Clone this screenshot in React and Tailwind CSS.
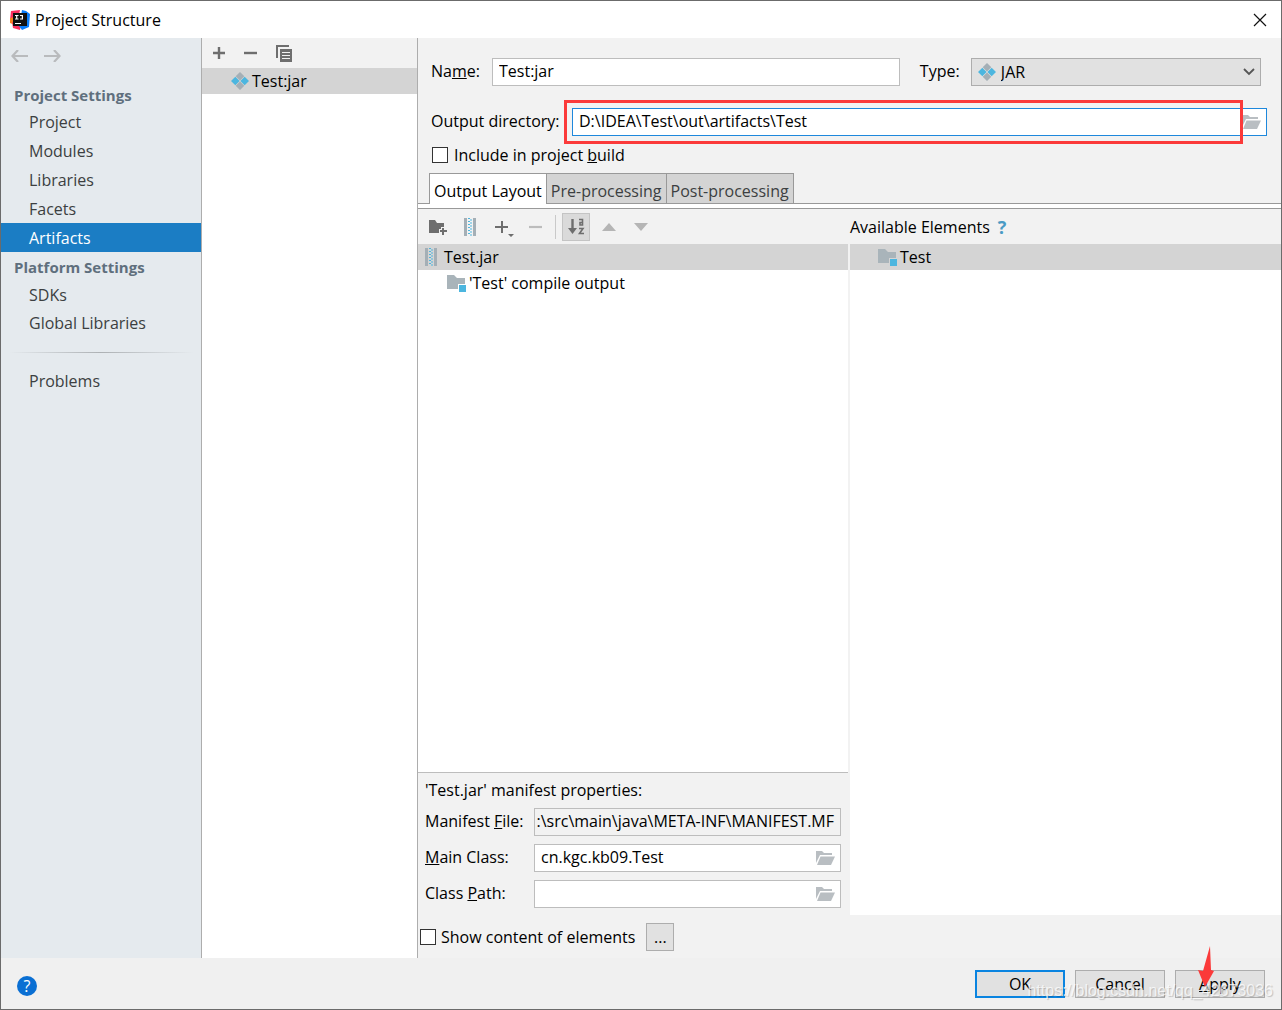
import clsx from "clsx";
import { useState } from "react";

const projectItems = ["Project", "Modules", "Libraries", "Facets", "Artifacts"];
const platformItems = ["SDKs", "Global Libraries"];
const tabs = ["Output Layout", "Pre-processing", "Post-processing"];

function AppLogo() {
  return (
    <svg width="20" height="20" viewBox="0 0 20 20">
      <path d="M1 1l9-1-2 10-8 0z" fill="#fe2f60" />
      <path d="M0 8l5-1v8l-5-2z" fill="#fc801d" />
      <path d="M2 12l9 3-1 5-7-2z" fill="#fe315d" />
      <path d="M12 0l4 1 4 3-1 13-7 3-3-4z" fill="#087cfa" />
      <rect x="3" y="3" width="14" height="13" fill="#111" />
      <path d="M5 5.500h3.500M6.700 5v4M5 9h3.500M10 5.500h3M12.400 5v4h-2.400" stroke="#fff" strokeWidth="1.200" fill="none" />
      <path d="M5 13.500h6" stroke="#fff" strokeWidth="1" />
    </svg>
  );
}

function DiamondIcon() {
  return (
    <svg width="18" height="18" viewBox="0 0 18 18" className="shrink-0">
      <path d="M9 0l4.300 4.300L9 8.600 4.700 4.300zM9 9.400l4.300 4.300L9 18l-4.300-4.300z" fill="#a4afb6" />
      <path d="M4.300 4.700L8.600 9l-4.300 4.300L0 9zM13.700 4.700L18 9l-4.300 4.300L9.400 9z" fill="#4cb6df" />
    </svg>
  );
}

function ArchiveIcon() {
  return (
    <svg width="12" height="18" viewBox="0 0 12 18" className="shrink-0">
      <path d="M0 0h3v18H0zM9 0h3v18H9z" fill="#a4afb6" />
      <path
        d="M4 .5h2M6 2h2M4 3.500h2M6 5h2M4 6.500h2M6 8h2M4 9.500h2M6 11h2M4 12.500h2M6 14h2M4 15.500h2M6 17h2"
        stroke="#4cb6df"
        strokeWidth="1.200"
      />
    </svg>
  );
}

function ModuleIcon() {
  return (
    <svg width="20" height="19" viewBox="0 0 20 19" className="shrink-0">
      <path d="M0 1h7l3 3h8v6h-7v5H0z" fill="#a9b4ba" />
      <path d="M12 11h7v7h-7z" fill="#4cb6df" />
    </svg>
  );
}

function BrowseIcon() {
  return (
    <svg width="19" height="14" viewBox="0 0 19 14">
      <path d="M0 12V0h6l2 2h8v2H4z" fill="#b9bec2" />
      <path d="M4.500 5.500H19L15 14H1z" fill="#b9bec2" />
    </svg>
  );
}

function Field({ id, value, browse, focused, className }) {
  return (
    <div
      className={clsx(
        "flex h-7 items-center border bg-white",
        focused ? "border-[#1e88dc]" : "border-[#bdbdbd]",
        className
      )}
    >
      <input
        id={id}
        type="text"
        defaultValue={value}
        className="h-full w-full min-w-0 flex-1 bg-transparent px-1.5 pb-0.5 outline-none"
      />
      {browse && (
        <button aria-label="Browse" className="mr-[5px]">
          <BrowseIcon />
        </button>
      )}
    </div>
  );
}

function Check({ id }) {
  return (
    <input
      id={id}
      type="checkbox"
      className="size-4 shrink-0 appearance-none border border-[#333] bg-white checked:bg-[#1d7ec5]"
    />
  );
}

function NavItem({ label, active, onClick, className }) {
  return (
    <button
      onClick={onClick}
      className={clsx(
        "block w-full pl-7 text-left",
        active ? "bg-[#1b7dc4] text-white" : "text-[#3c3f41]",
        className
      )}
    >
      {label}
    </button>
  );
}

function Sidebar() {
  const [active, setActive] = useState("Artifacts");

  return (
    <nav className="w-[201px] shrink-0 border-r border-[#adadad] bg-[#e5eaee]">
      <div className="flex h-9 items-center gap-4 pl-2.5 text-[#b9bbbd]">
        <button aria-label="Back">
          <svg width="17" height="12" viewBox="0 0 17 12" fill="none" stroke="currentColor" strokeWidth="2.200">
            <path d="M17 6H2M7 0L1.500 6l5.500 6" />
          </svg>
        </button>
        <button aria-label="Forward">
          <svg width="17" height="12" viewBox="0 0 17 12" fill="none" stroke="currentColor" strokeWidth="2.200">
            <path d="M0 6h15M10 0l5.500 6-5.500 6" />
          </svg>
        </button>
      </div>
      <h2 className="mt-2 pt-px pl-[13px] text-[15px] leading-6 font-bold text-[#5f6f7d]">
        Project Settings
      </h2>
      {projectItems.map((item) => (
        <NavItem
          key={item}
          label={item}
          active={item === active}
          onClick={() => setActive(item)}
          className="h-[29px]"
        />
      ))}
      <h2 className="pt-px pl-[13px] text-[15px] leading-7 font-bold text-[#5f6f7d]">
        Platform Settings
      </h2>
      {platformItems.map((item) => (
        <NavItem
          key={item}
          label={item}
          active={item === active}
          onClick={() => setActive(item)}
          className="h-7"
        />
      ))}
      <div className="mx-2 mt-[15px] mb-3.5 h-px bg-linear-to-r from-transparent via-[#adb1b4] to-transparent" />
      <NavItem
        label="Problems"
        active={active === "Problems"}
        onClick={() => setActive("Problems")}
        className="h-7"
      />
    </nav>
  );
}

function ArtifactList() {
  return (
    <section className="w-[216px] shrink-0 border-r border-[#adadad] bg-white">
      <div className="flex h-[30px] items-center bg-[#f2f2f2] pl-2.5 text-[#6e6e6e]">
        <button aria-label="Add">
          <svg width="14" height="14" viewBox="0 0 14 14" stroke="currentColor" strokeWidth="2.400">
            <path d="M7 1v12M1 7h12" />
          </svg>
        </button>
        <button aria-label="Remove" className="ml-[18px]">
          <svg width="14" height="14" viewBox="0 0 14 14" stroke="currentColor" strokeWidth="2.400">
            <path d="M0 7h13" />
          </svg>
        </button>
        <button aria-label="Copy" className="ml-[18px]">
          <svg width="17" height="17" viewBox="0 0 17 17" fill="none" stroke="currentColor" strokeWidth="2">
            <path d="M1 13V1h12" />
            <path d="M4 4h12v13H4z" fill="currentColor" stroke="none" />
            <path d="M6 7.500h8M6 10.500h8M6 13.500h8" stroke="#f2f2f2" strokeWidth="1" />
          </svg>
        </button>
      </div>
      <button className="flex h-[26px] w-full items-center gap-[3px] bg-[#d4d4d4] pl-[29px]">
        <DiamondIcon />
        Test:jar
      </button>
    </section>
  );
}

function ArtifactForm() {
  return (
    <div className="pt-5 pr-3.5 pl-[13px]">
      <div className="flex items-center pr-1.5">
        <label htmlFor="name" className="w-[61px] pb-0.5">
          Na<u>m</u>e:
        </label>
        <Field id="name" value="Test:jar" className="flex-[407]" />
        <label htmlFor="type" className="ml-5 w-[51px] pb-0.5">
          Type:
        </label>
        <div className="relative flex-[291]">
          <select
            id="type"
            className="block h-7 w-full appearance-none border border-[#adadad] bg-[#e1e1e1] pl-[29px] outline-none"
          >
            <option>JAR</option>
          </select>
          <span className="pointer-events-none absolute top-[5px] left-[7px]">
            <DiamondIcon />
          </span>
          <svg
            width="12"
            height="8"
            viewBox="0 0 12 8"
            className="pointer-events-none absolute top-2.5 right-1.5"
            fill="none"
            stroke="#555"
            strokeWidth="1.800"
          >
            <path d="M1 1l5 5 5-5" />
          </svg>
        </div>
      </div>

      <div className="mt-[22px] flex items-center">
        <label htmlFor="output" className="w-[141px] pb-0.5 whitespace-nowrap">
          Output directory:
        </label>
        <div className="relative flex-1">
          <Field id="output" value="D:\IDEA\Test\out\artifacts\Test" browse focused />
          <div className="pointer-events-none absolute -top-2 right-6 -bottom-2 -left-2 border-3 border-[#fb3a3a]" />
        </div>
      </div>

      <div className="mt-1.5 flex h-[26px] items-center gap-1.5 pl-px">
        <Check id="include" />
        <label htmlFor="include">
          Include in project <u>b</u>uild
        </label>
      </div>
    </div>
  );
}

function Tabs() {
  const [active, setActive] = useState(tabs[0]);

  return (
    <div className="mt-[5px] border-b border-[#999] bg-white pb-1">
      <div className="flex h-[31px] border-b border-[#999] bg-[#f2f2f2] pl-[11px]">
        {tabs.map((tab) => (
          <button
            key={tab}
            onClick={() => setActive(tab)}
            className={clsx(
              "-mr-px border border-b-0 border-[#999] px-1 pt-1 whitespace-nowrap",
              tab === active ? "-mb-px bg-white pb-px" : "bg-[#d4d4d4] text-[#3c3f41]"
            )}
          >
            {tab}
          </button>
        ))}
      </div>
    </div>
  );
}

function LayoutToolbar() {
  return (
    <div className="flex h-[35px] items-center pl-[11px] text-[#6e6e6e]">
      <button aria-label="Create Directory">
        <svg width="18" height="17" viewBox="0 0 18 17" fill="currentColor">
          <path d="M0 2h6l2 3h7v4h-3v2h-2v4H0z" />
          <path d="M13 10h2v2h3v2h-3v3h-2v-3h-2v-2h2z" />
        </svg>
      </button>
      <button aria-label="Create Archive" className="ml-[17px]">
        <ArchiveIcon />
      </button>
      <button aria-label="Add Copy of" className="ml-[19px]">
        <svg width="19" height="20" viewBox="0 0 19 20" fill="currentColor">
          <path d="M6 4h2v5h5v2H8v5H6v-5H0V9h6zM13 17h6l-3 3z" />
        </svg>
      </button>
      <button aria-label="Remove Element" className="ml-[15px] text-[#bcbcbc]">
        <svg width="13" height="14" viewBox="0 0 13 14" stroke="currentColor" strokeWidth="2.200">
          <path d="M0 7h13" />
        </svg>
      </button>
      <div className="mr-1.5 ml-[13px] h-6 w-px bg-[#c9c9c9]" />
      <button
        aria-label="Sort Elements by Names"
        className="flex size-7 items-center justify-center border border-[#c4c4c4] bg-[#dadada]"
      >
        <svg width="17" height="17" viewBox="0 0 17 17" fill="none" stroke="currentColor" strokeWidth="2">
          <path d="M4.500 1v12" strokeWidth="2.400" />
          <path d="M0 10h9l-4.500 6z" fill="currentColor" stroke="none" />
          <path d="M11 1.500h3.500V7H12V4.500h2.500M11 10.500h4l-3.500 5h4.500" strokeWidth="1.600" />
        </svg>
      </button>
      <button aria-label="Move Up" className="ml-3 text-[#b5b5b5]">
        <svg width="14" height="8" viewBox="0 0 14 8" fill="currentColor">
          <path d="M0 8l7-8 7 8z" />
        </svg>
      </button>
      <button aria-label="Move Down" className="ml-[18px] text-[#b5b5b5]">
        <svg width="14" height="8" viewBox="0 0 14 8" fill="currentColor">
          <path d="M0 0l7 8 7-8z" />
        </svg>
      </button>
    </div>
  );
}

function Manifest() {
  return (
    <div className="border-t border-[#bdbdbd] bg-[#f2f2f2] pt-[5px] pr-[7px] pb-[7px] pl-[7px]">
      <h3 className="leading-6">'Test.jar' manifest properties:</h3>
      <div className="mt-1.5 grid grid-cols-[109px_1fr] items-center gap-y-2">
        <label htmlFor="manifest" className="pb-0.5">
          Manifest <u>F</u>ile:
        </label>
        <div className="flex h-7 items-center justify-end overflow-hidden border border-[#bdbdbd] px-1.5 pb-0.5">
          <output id="manifest" className="whitespace-nowrap">
            :\src\main\java\META-INF\MANIFEST.MF
          </output>
        </div>
        <label htmlFor="mainClass" className="pb-0.5">
          <u>M</u>ain Class:
        </label>
        <Field id="mainClass" value="cn.kgc.kb09.Test" browse />
        <label htmlFor="classPath" className="pb-0.5">
          Class <u>P</u>ath:
        </label>
        <Field id="classPath" value="" browse />
      </div>
    </div>
  );
}

function ArtifactEditor() {
  return (
    <main className="flex min-w-0 flex-1 flex-col bg-[#f2f2f2]">
      <ArtifactForm />
      <Tabs />
      <div className="grid flex-1 grid-cols-[430fr_431fr] gap-0.5">
        <section className="flex min-w-0 flex-col">
          <LayoutToolbar />
          <div className="flex-1 bg-white">
            <div className="flex h-[26px] items-center gap-[7px] bg-[#d4d4d4] pl-[7px]">
              <ArchiveIcon />
              Test.jar
            </div>
            <div className="flex h-[26px] items-center gap-0.5 pl-[29px]">
              <ModuleIcon />
              'Test' compile output
            </div>
          </div>
          <Manifest />
        </section>
        <section className="flex min-w-0 flex-col">
          <div className="flex h-[35px] items-center gap-2">
            <h3>Available Elements</h3>
            <button aria-label="Help" className="text-lg font-bold text-[#4a9ac4]">
              ?
            </button>
          </div>
          <div className="flex-1 bg-white">
            <div className="flex h-[26px] items-center gap-0.5 bg-[#d4d4d4] pl-7">
              <ModuleIcon />
              Test
            </div>
          </div>
        </section>
      </div>
      <div className="flex h-[43px] items-center pl-0.5">
        <Check id="showContent" />
        <label htmlFor="showContent" className="ml-[5px]">
          Show content of elements
        </label>
        <button className="ml-[11px] size-7 border border-[#adadad] bg-[#e1e1e1]">...</button>
      </div>
    </main>
  );
}

function Footer() {
  return (
    <footer className="relative flex h-[51px] items-center bg-[#f0f0f0] px-4">
      <button
        aria-label="Help"
        className="mt-1 size-5 rounded-full bg-[#0a6fd3] text-base leading-5 text-white"
      >
        ?
      </button>
      <div className="ml-auto flex gap-2.5">
        <button className="h-7 w-[90px] border-2 border-[#0a84e0] bg-[#e1e1e1]">OK</button>
        <button className="h-7 w-[90px] border border-[#adadad] bg-[#e1e1e1]">Cancel</button>
        <button className="h-7 w-[90px] border border-[#adadad] bg-[#e1e1e1]">
          <u>A</u>pply
        </button>
      </div>
      <svg width="16" height="41" viewBox="0 0 16 41" className="absolute -top-3 right-[67px]">
        <path d="M12 0l1 24 3 1-9 16-7-17 5 1z" fill="#fb3a3a" />
      </svg>
      <span className="pointer-events-none absolute right-2 bottom-1.5 font-['Liberation_Sans',sans-serif] text-white/75 text-shadow-[1px_1px_1px_#00000033]">
        https://blog.csdn.net/qq_42673036
      </span>
    </footer>
  );
}

export default function App() {
  return (
    <div className="flex min-h-screen flex-col border border-[#6b6b6b] bg-white font-['Open_Sans','Noto_Sans',sans-serif] text-base leading-6 text-black">
      <header className="flex h-[37px] items-center gap-[5px] pr-3.5 pl-[9px]">
        <AppLogo />
        <h1>Project Structure</h1>
        <button aria-label="Close" className="ml-auto">
          <svg width="14" height="14" viewBox="0 0 14 14" stroke="#111" strokeWidth="1.200">
            <path d="M1 1l12 12M13 1L1 13" />
          </svg>
        </button>
      </header>
      <div className="flex flex-1">
        <Sidebar />
        <ArtifactList />
        <ArtifactEditor />
      </div>
      <Footer />
    </div>
  );
}
